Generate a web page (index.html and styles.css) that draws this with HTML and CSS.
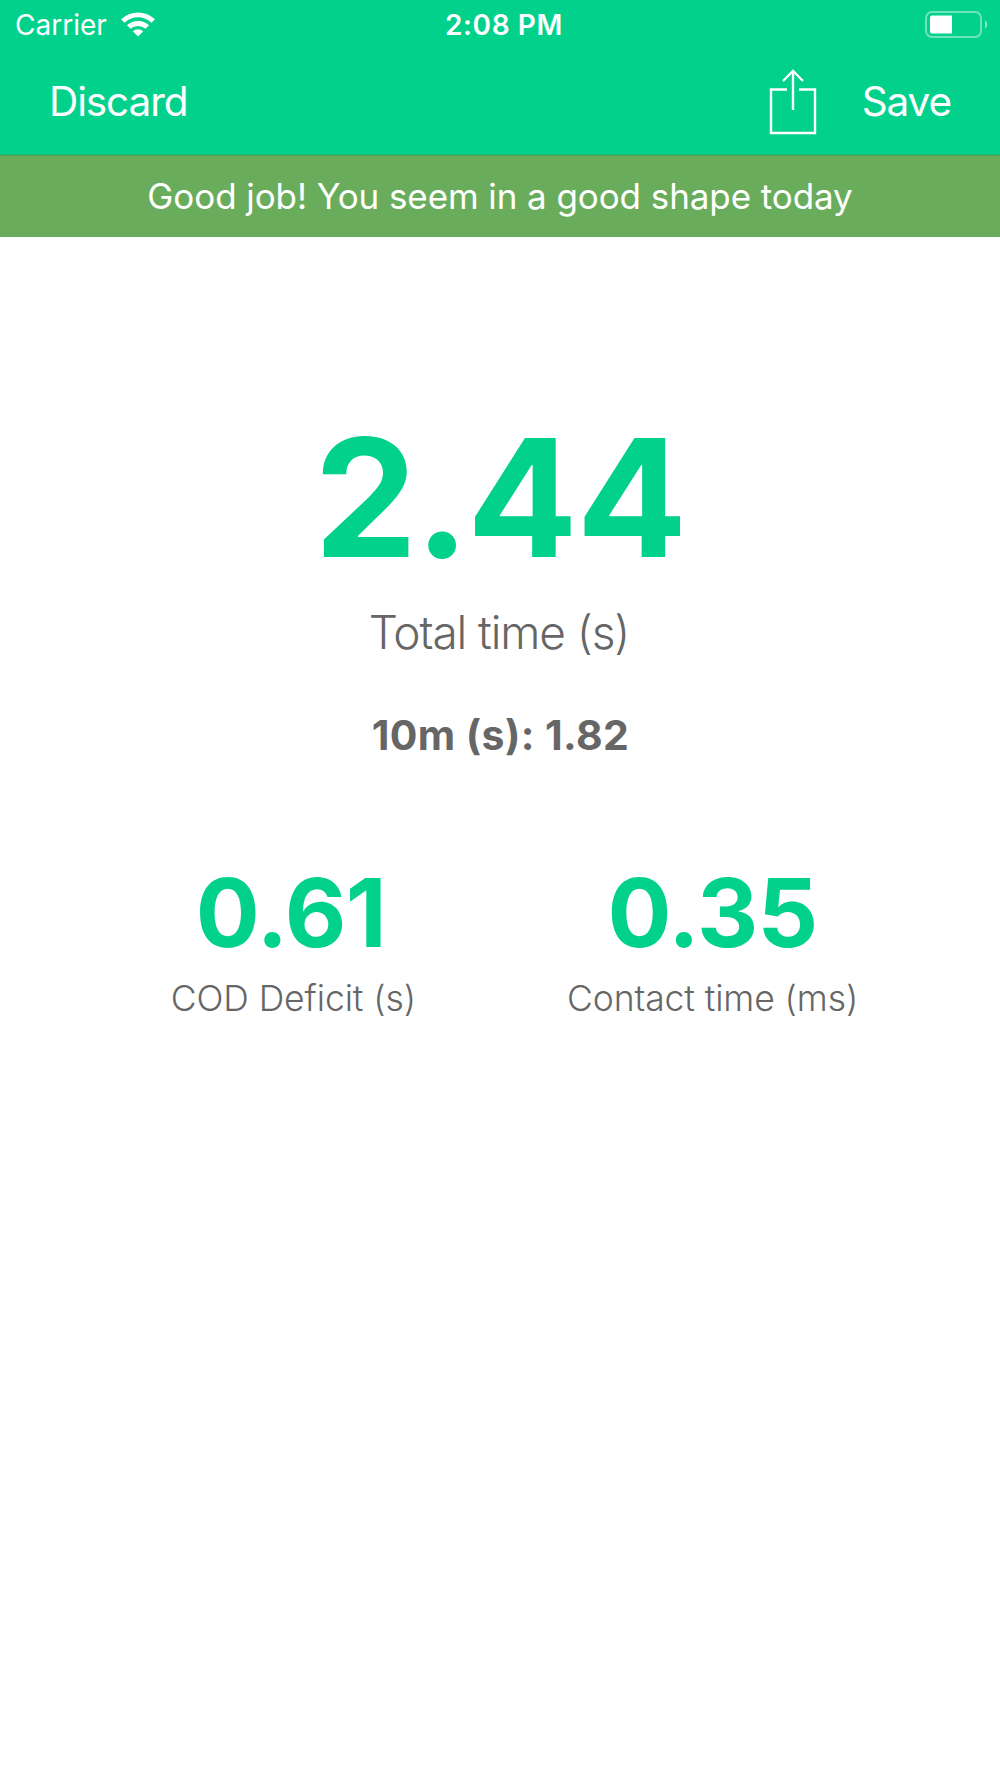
FILE: index.html
```html
<!DOCTYPE html>
<html lang="en">
<head>
<meta charset="utf-8">
<title>Test result</title>
<link rel="stylesheet" href="styles.css">
</head>
<body>
<header class="header">
  <div class="status">
    <div class="status-left"><span class="carrier">Carrier</span>
      <svg class="wifi" width="34" height="25" viewBox="0 0 34 25" fill="#fff"><path d="M17 24.500l5.200-5.200a8.500 8.500 0 0 0-10.400 0z"/><path d="M5.900 13.200a16.500 16.500 0 0 1 22.200 0l-3.600 3.600a11.500 11.500 0 0 0-15 0z"/><path d="M0 7.300a24.500 24.500 0 0 1 34 0l-3.500 3.500a19.500 19.500 0 0 0-27 0z"/></svg>
    </div>
    <span class="clock">2:08 PM</span>
    <svg class="battery" width="64" height="28" viewBox="0 0 64 28"><rect x="1" y="1" width="55" height="25" rx="6" fill="none" stroke="#fff" stroke-opacity=".42" stroke-width="2"/><path d="M27 4.500v18H7a2 2 0 0 1-2-2v-14a2 2 0 0 1 2-2z" fill="#fff"/><path d="M60 9a5.500 5.500 0 0 1 0 9z" fill="#fff" fill-opacity=".5"/></svg>
  </div>
  <nav class="nav">
    <span class="discard">Discard</span>
    <svg class="share" width="48" height="66" viewBox="0 0 48 66" fill="none" stroke="#fff" stroke-width="2.400"><path d="M18 20.500H2v43.500h44V20.500H30M24 41V2M14 12L24 2l10 10"/></svg>
    <span class="save">Save</span>
  </nav>
</header>
<div class="banner"><span>Good job! You seem in a good shape today</span></div>
<main class="main">
  <div class="total"><span class="total-whole">2.</span>44</div>
  <div class="total-label">Total time (s)</div>
  <div class="split">10m (s): 1.82</div>
  <div class="metrics">
    <section class="metric"><div class="value">0.61</div><div class="label">COD Deficit (s)</div></section>
    <section class="metric"><div class="value">0.35</div><div class="label">Contact time (ms)</div></section>
  </div>
</main>
</body>
</html>
```
FILE: styles.css
```css
* { box-sizing: border-box; }
body { margin: 0; min-height: 1778px; background: #fff; font-family: Inter, sans-serif; color: #666; white-space: nowrap; }
.header { height: 155px; background: #02d18c; color: #fff; border-bottom: 1px solid #1fbb76; }
.status { height: 50px; display: grid; grid-template-columns: 1fr auto 1fr; align-items: center; padding: 0 11px 1px 15px; }
.status-left { display: flex; align-items: center; gap: 14px; font-size: 28px; font-weight: 400; letter-spacing: 0; }
.clock { padding-left: 4px; font-size: 28px; font-weight: 600; letter-spacing: 0.6px; }
.battery { justify-self: end; margin-top: 1px; }
.nav { height: 103px; display: flex; align-items: center; padding: 0 49px; font-size: 40.5px; font-weight: 400; letter-spacing: -1.1px; }
.discard { margin-right: auto; }
.share { margin: 0 45px 0 0; }
.banner { height: 82px; padding-bottom: 2px; background: #69ad5c; border-top: 1px solid #559f58; color: #fff; display: flex; align-items: center; justify-content: center; font-size: 35px; font-weight: 400; letter-spacing: -0.08px; }
.main { padding-top: 173px; text-align: center; }
.total { font-size: 164px; line-height: 176px; font-weight: 700; letter-spacing: -1.4px; color: #02d18c; }
.total-whole { letter-spacing: -2.5px; }
.total-label { margin-top: 14px; font-size: 46px; line-height: 64px; font-weight: 300; letter-spacing: -1.1px; padding-right: 2px; }
.split { margin-top: 46px; font-size: 41px; line-height: 50px; font-weight: 700; letter-spacing: 0.4px; padding-left: 1px; }
.metrics { display: flex; justify-content: center; gap: 151px; margin-top: 98px; padding-left: 29px; }
.value { font-size: 95px; line-height: 110px; font-weight: 700; letter-spacing: -0.7px; color: #02d18c; }
.metric:first-child .value { padding-right: 5px; }
.label { font-size: 35.5px; line-height: 50px; margin-top: 6px; font-weight: 300; letter-spacing: -0.1px; }
```
